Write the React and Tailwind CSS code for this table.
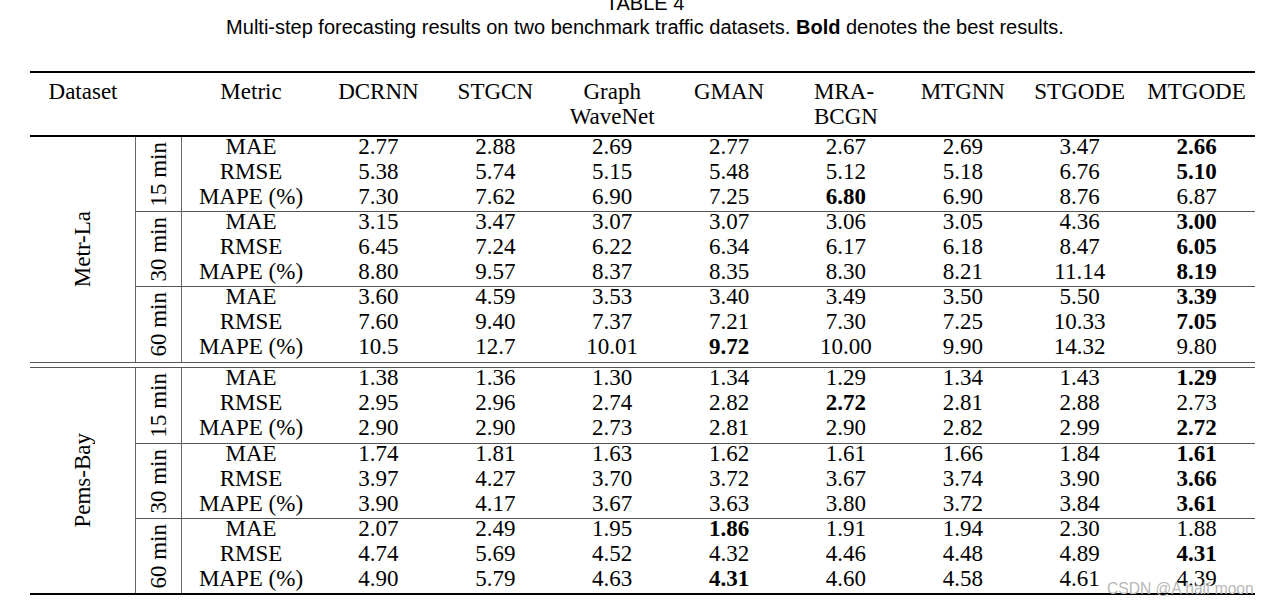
import React from "react";

const serif = { fontFamily: '"Liberation Serif", "Times New Roman", serif' };

const sections = [
  {
    name: "Metr-La",
    heights: ["h-[74px]", "h-[75px]", "h-[76px]"],
    groups: [
      {
        label: "15 min",
        rows: [
          ["MAE", "2.77", "2.88", "2.69", "2.77", "2.67", "2.69", "3.47", "*2.66"],
          ["RMSE", "5.38", "5.74", "5.15", "5.48", "5.12", "5.18", "6.76", "*5.10"],
          ["MAPE (%)", "7.30", "7.62", "6.90", "7.25", "*6.80", "6.90", "8.76", "6.87"],
        ],
      },
      {
        label: "30 min",
        rows: [
          ["MAE", "3.15", "3.47", "3.07", "3.07", "3.06", "3.05", "4.36", "*3.00"],
          ["RMSE", "6.45", "7.24", "6.22", "6.34", "6.17", "6.18", "8.47", "*6.05"],
          ["MAPE (%)", "8.80", "9.57", "8.37", "8.35", "8.30", "8.21", "11.14", "*8.19"],
        ],
      },
      {
        label: "60 min",
        rows: [
          ["MAE", "3.60", "4.59", "3.53", "3.40", "3.49", "3.50", "5.50", "*3.39"],
          ["RMSE", "7.60", "9.40", "7.37", "7.21", "7.30", "7.25", "10.33", "*7.05"],
          ["MAPE (%)", "10.5", "12.7", "10.01", "*9.72", "10.00", "9.90", "14.32", "9.80"],
        ],
      },
    ],
  },
  {
    name: "Pems-Bay",
    heights: ["h-[75px]", "h-[75px]", "h-[75px]"],
    groups: [
      {
        label: "15 min",
        rows: [
          ["MAE", "1.38", "1.36", "1.30", "1.34", "1.29", "1.34", "1.43", "*1.29"],
          ["RMSE", "2.95", "2.96", "2.74", "2.82", "*2.72", "2.81", "2.88", "2.73"],
          ["MAPE (%)", "2.90", "2.90", "2.73", "2.81", "2.90", "2.82", "2.99", "*2.72"],
        ],
      },
      {
        label: "30 min",
        rows: [
          ["MAE", "1.74", "1.81", "1.63", "1.62", "1.61", "1.66", "1.84", "*1.61"],
          ["RMSE", "3.97", "4.27", "3.70", "3.72", "3.67", "3.74", "3.90", "*3.66"],
          ["MAPE (%)", "3.90", "4.17", "3.67", "3.63", "3.80", "3.72", "3.84", "*3.61"],
        ],
      },
      {
        label: "60 min",
        rows: [
          ["MAE", "2.07", "2.49", "1.95", "*1.86", "1.91", "1.94", "2.30", "1.88"],
          ["RMSE", "4.74", "5.69", "4.52", "4.32", "4.46", "4.48", "4.89", "*4.31"],
          ["MAPE (%)", "4.90", "5.79", "4.63", "*4.31", "4.60", "4.58", "4.61", "4.39"],
        ],
      },
    ],
  },
];

function Cell({ v }) {
  const bold = v.startsWith("*");
  return (
    <div className={"text-center whitespace-nowrap " + (bold ? "font-bold" : "")}>
      {bold ? v.slice(1) : v}
    </div>
  );
}

function Section({ sec }) {
  return (
    <div className="flex h-[225px]">
      <div className="w-[106px] shrink-0 border-r border-[#666] flex items-center justify-center">
        <span className="[writing-mode:vertical-rl] rotate-180 whitespace-nowrap leading-[25px]">
          {sec.name}
        </span>
      </div>
      <div className="flex-1 flex flex-col">
        {sec.groups.map((g, gi) => (
          <div
            key={gi}
            className={
              "flex " + sec.heights[gi] + " " + (gi > 0 ? "border-t border-[#555]" : "")
            }
          >
            <div className="w-[46px] shrink-0 border-r border-[#666] flex items-center justify-center">
              <span className="[writing-mode:vertical-rl] rotate-180 whitespace-nowrap leading-[25px]">
                {g.label}
              </span>
            </div>
            <div className="flex-1 -mt-[3px]">
              {g.rows.map((r, ri) => (
                <div key={ri} className="grid grid-cols-[138px_repeat(8,1fr)] h-[25px] leading-[25px]">
                  {r.map((v, ci) => (
                    <Cell key={ci} v={v} />
                  ))}
                </div>
              ))}
            </div>
          </div>
        ))}
      </div>
    </div>
  );
}

export default function App() {
  return (
    <div className="relative w-[1271px] h-[605px] overflow-hidden bg-white text-black">
      <div className="ml-[30px] w-[1225px]">
        <div
          className="-mt-[9px] pl-[5px] text-center text-[20px] leading-[24px]"
          style={{ fontFamily: '"Liberation Sans", Arial, sans-serif' }}
        >
          <div>TABLE 4</div>
          <div>
            Multi-step forecasting results on two benchmark traffic datasets. <b>Bold</b> denotes the
            best results.
          </div>
        </div>

        <div className="mt-[32px] text-[23px] leading-[25px]" style={serif}>
          <div className="border-t-2 border-black" />
          <div className="grid grid-cols-[106px_46px_138px_repeat(8,1fr)] pt-[6px] pb-[6px] items-start">
            <div className="text-center">Dataset</div>
            <div />
            <div className="text-center">Metric</div>
            <div className="text-center">DCRNN</div>
            <div className="text-center">STGCN</div>
            <div className="text-center">
              <div>Graph</div>
              <div>WaveNet</div>
            </div>
            <div className="text-center">GMAN</div>
            <div className="text-center">
              <div className="inline-block text-left">
                <div>MRA-</div>
                <div>BCGN</div>
              </div>
            </div>
            <div className="text-center">MTGNN</div>
            <div className="text-center">STGODE</div>
            <div className="text-center whitespace-nowrap">MTGODE</div>
          </div>
          <div className="border-t-2 border-black" />
          <Section sec={sections[0]} />
          <div className="h-[6px] border-t border-b border-[#555]" />
          <Section sec={sections[1]} />
          <div className="border-t-2 border-black" />
        </div>
      </div>
      <div
        className="absolute left-[1107px] top-[581px] text-[15.6px] leading-none text-[#b8b8b8] whitespace-nowrap"
        style={{ fontFamily: '"Liberation Sans", Arial, sans-serif' }}
      >
        CSDN @A half moon
      </div>
    </div>
  );
}
